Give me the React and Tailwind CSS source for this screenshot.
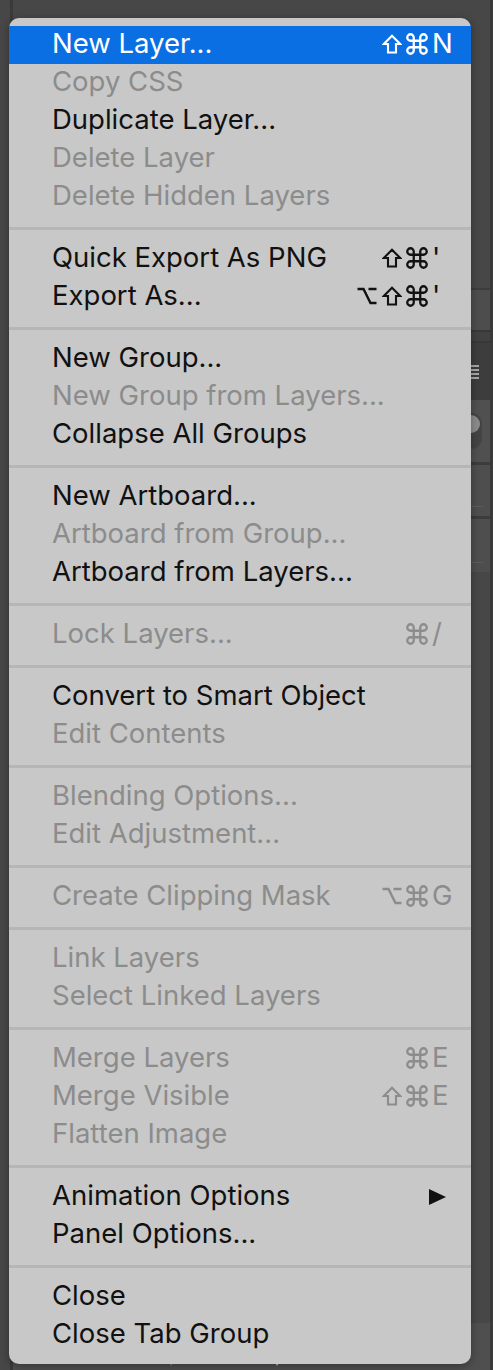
import React from "react";
import { Command } from "lucide-react";

const groups = [
  [
    { label: "New Layer...", mods: ["shift", "cmd"], key: "N", active: true },
    { label: "Copy CSS", off: true },
    { label: "Duplicate Layer..." },
    { label: "Delete Layer", off: true },
    { label: "Delete Hidden Layers", off: true },
  ],
  [
    { label: "Quick Export As PNG", mods: ["shift", "cmd"], key: "'" },
    { label: "Export As...", mods: ["opt", "shift", "cmd"], key: "'" },
  ],
  [
    { label: "New Group..." },
    { label: "New Group from Layers...", off: true },
    { label: "Collapse All Groups" },
  ],
  [
    { label: "New Artboard..." },
    { label: "Artboard from Group...", off: true },
    { label: "Artboard from Layers..." },
  ],
  [{ label: "Lock Layers...", off: true, mods: ["cmd"], key: "/" }],
  [{ label: "Convert to Smart Object" }, { label: "Edit Contents", off: true }],
  [
    { label: "Blending Options...", off: true },
    { label: "Edit Adjustment...", off: true },
  ],
  [{ label: "Create Clipping Mask", off: true, mods: ["opt", "cmd"], key: "G" }],
  [
    { label: "Link Layers", off: true },
    { label: "Select Linked Layers", off: true },
  ],
  [
    { label: "Merge Layers", off: true, mods: ["cmd"], key: "E" },
    { label: "Merge Visible", off: true, mods: ["shift", "cmd"], key: "E" },
    { label: "Flatten Image", off: true },
  ],
  [{ label: "Animation Options", submenu: true }, { label: "Panel Options..." }],
  [{ label: "Close" }, { label: "Close Tab Group" }],
];

function ModKey({ name }) {
  if (name === "cmd") {
    return <Command size={26} strokeWidth={2.1} className="-m-[3px]" />;
  }
  if (name === "shift") {
    return (
      <svg width="20" height="20" viewBox="0 0 20 20">
        <path
          d="M10 1.8 L18.2 10 H14 V18.5 H6 V10 H1.8 Z"
          fill="none"
          stroke="currentColor"
          strokeWidth="2.1"
        />
      </svg>
    );
  }
  return (
    <svg width="20" height="20" viewBox="0 0 20 20">
      <path
        d="M0.5 3 H6.5 L13.5 17 H19.5 M11.5 3 H19.5"
        fill="none"
        stroke="currentColor"
        strokeWidth="2.4"
      />
    </svg>
  );
}

function MenuRow({ item }) {
  const color = item.active
    ? "bg-[#0a6fe3] text-white"
    : item.off
    ? "text-[#8c8c8c]"
    : "text-[#111111]";

  return (
    <div className={`flex h-[38px] items-center pl-[43px] pr-[15px] ${color}`}>
      <span className="flex-1 whitespace-nowrap pb-[3px] text-[27.5px] leading-none">
        {item.label}
      </span>
      {item.key && (
        <span className="flex items-center pb-[2px]">
          <span className="flex items-center gap-[5px]">
            {item.mods.map((m) => (
              <ModKey key={m} name={m} />
            ))}
          </span>
          <span className="ml-[5px] w-[24px] pb-[1px] text-[27.5px] leading-none">
            {item.key}
          </span>
        </span>
      )}
      {item.submenu && (
        <svg width="17" height="16" viewBox="0 0 17 16" className="mr-[10px]">
          <polygon points="0,0 17,8 0,16" fill="#111111" />
        </svg>
      )}
    </div>
  );
}

function PanelBand({ className, children }) {
  return <div className={`relative ${className}`}>{children}</div>;
}

export default function App() {
  return (
    <div className="relative flex h-[1370px] w-[493px] overflow-hidden bg-[#474747] font-['Inter','Liberation_Sans',sans-serif]">
      <div className="w-[10px]" />
      <div className="w-[3px] bg-[#3a3a3a]" />

      <div className="flex flex-1 flex-col">
        <div className="h-[288px]" />
        <div className="h-[2px] bg-[#3c3c3c]" />
        <PanelBand className="h-[40px] bg-[#4d4d4d]" />
        <div className="h-[13px] border-y-2 border-[#383838] bg-[#414141]" />
        <PanelBand className="flex h-[57px] items-center justify-end bg-[#3d3d3d] pr-[11px]">
          <div className="flex w-[8px] flex-col gap-[2px]">
            <div className="h-[2px] bg-[#a8a8a8]" />
            <div className="h-[2px] bg-[#a8a8a8]" />
            <div className="h-[2px] bg-[#a8a8a8]" />
            <div className="h-[2px] bg-[#a8a8a8]" />
          </div>
        </PanelBand>
        <PanelBand className="flex h-[62px] items-center justify-end bg-[#505050] pr-[8px]">
          <div className="flex h-[36px] w-[22px] items-start justify-center rounded-full bg-[#444444] pt-[2px]">
            <div className="h-[18px] w-[18px] rounded-full bg-[#8c8c8c]" />
          </div>
        </PanelBand>
        <div className="h-[3px] bg-[#3c3c3c]" />
        <PanelBand className="flex h-[51px] items-end justify-end bg-[#4e4e4e] pb-[9px] pr-[7px]">
          <div className="h-px w-[14px] bg-[#5c5c5c]" />
        </PanelBand>
        <div className="h-[3px] bg-[#3c3c3c]" />
        <PanelBand className="flex h-[53px] items-end justify-end bg-[#4e4e4e] pb-[9px] pr-[7px]">
          <div className="h-px w-[14px] bg-[#5c5c5c]" />
        </PanelBand>
        <div className="flex-1" />
        <PanelBand className="flex h-[47px] items-end bg-[#4f4f4f] pb-[3px]">
          <div className="ml-[156px] text-[8px] leading-none text-[#8a8a8a]">▾</div>
          <div className="ml-[102px] text-[8px] leading-none text-[#d0d0d0]">▾</div>
        </PanelBand>
      </div>

      <div className="w-[3px] bg-[#3a3a3a]" />

      <div className="absolute left-[9px] top-[18px] w-[462px] rounded-[10px] bg-[#c8c8c8] pb-[10px] pt-[8px] shadow-[0_2px_8px_rgba(0,0,0,0.35)]">
        {groups.map((group, gi) => (
          <div key={gi}>
            {gi > 0 && (
              <div className="flex h-[24px] items-center">
                <div className="h-[3px] w-full bg-[#b6b6b6]" />
              </div>
            )}
            {group.map((item) => (
              <MenuRow key={item.label} item={item} />
            ))}
          </div>
        ))}
      </div>
    </div>
  );
}
